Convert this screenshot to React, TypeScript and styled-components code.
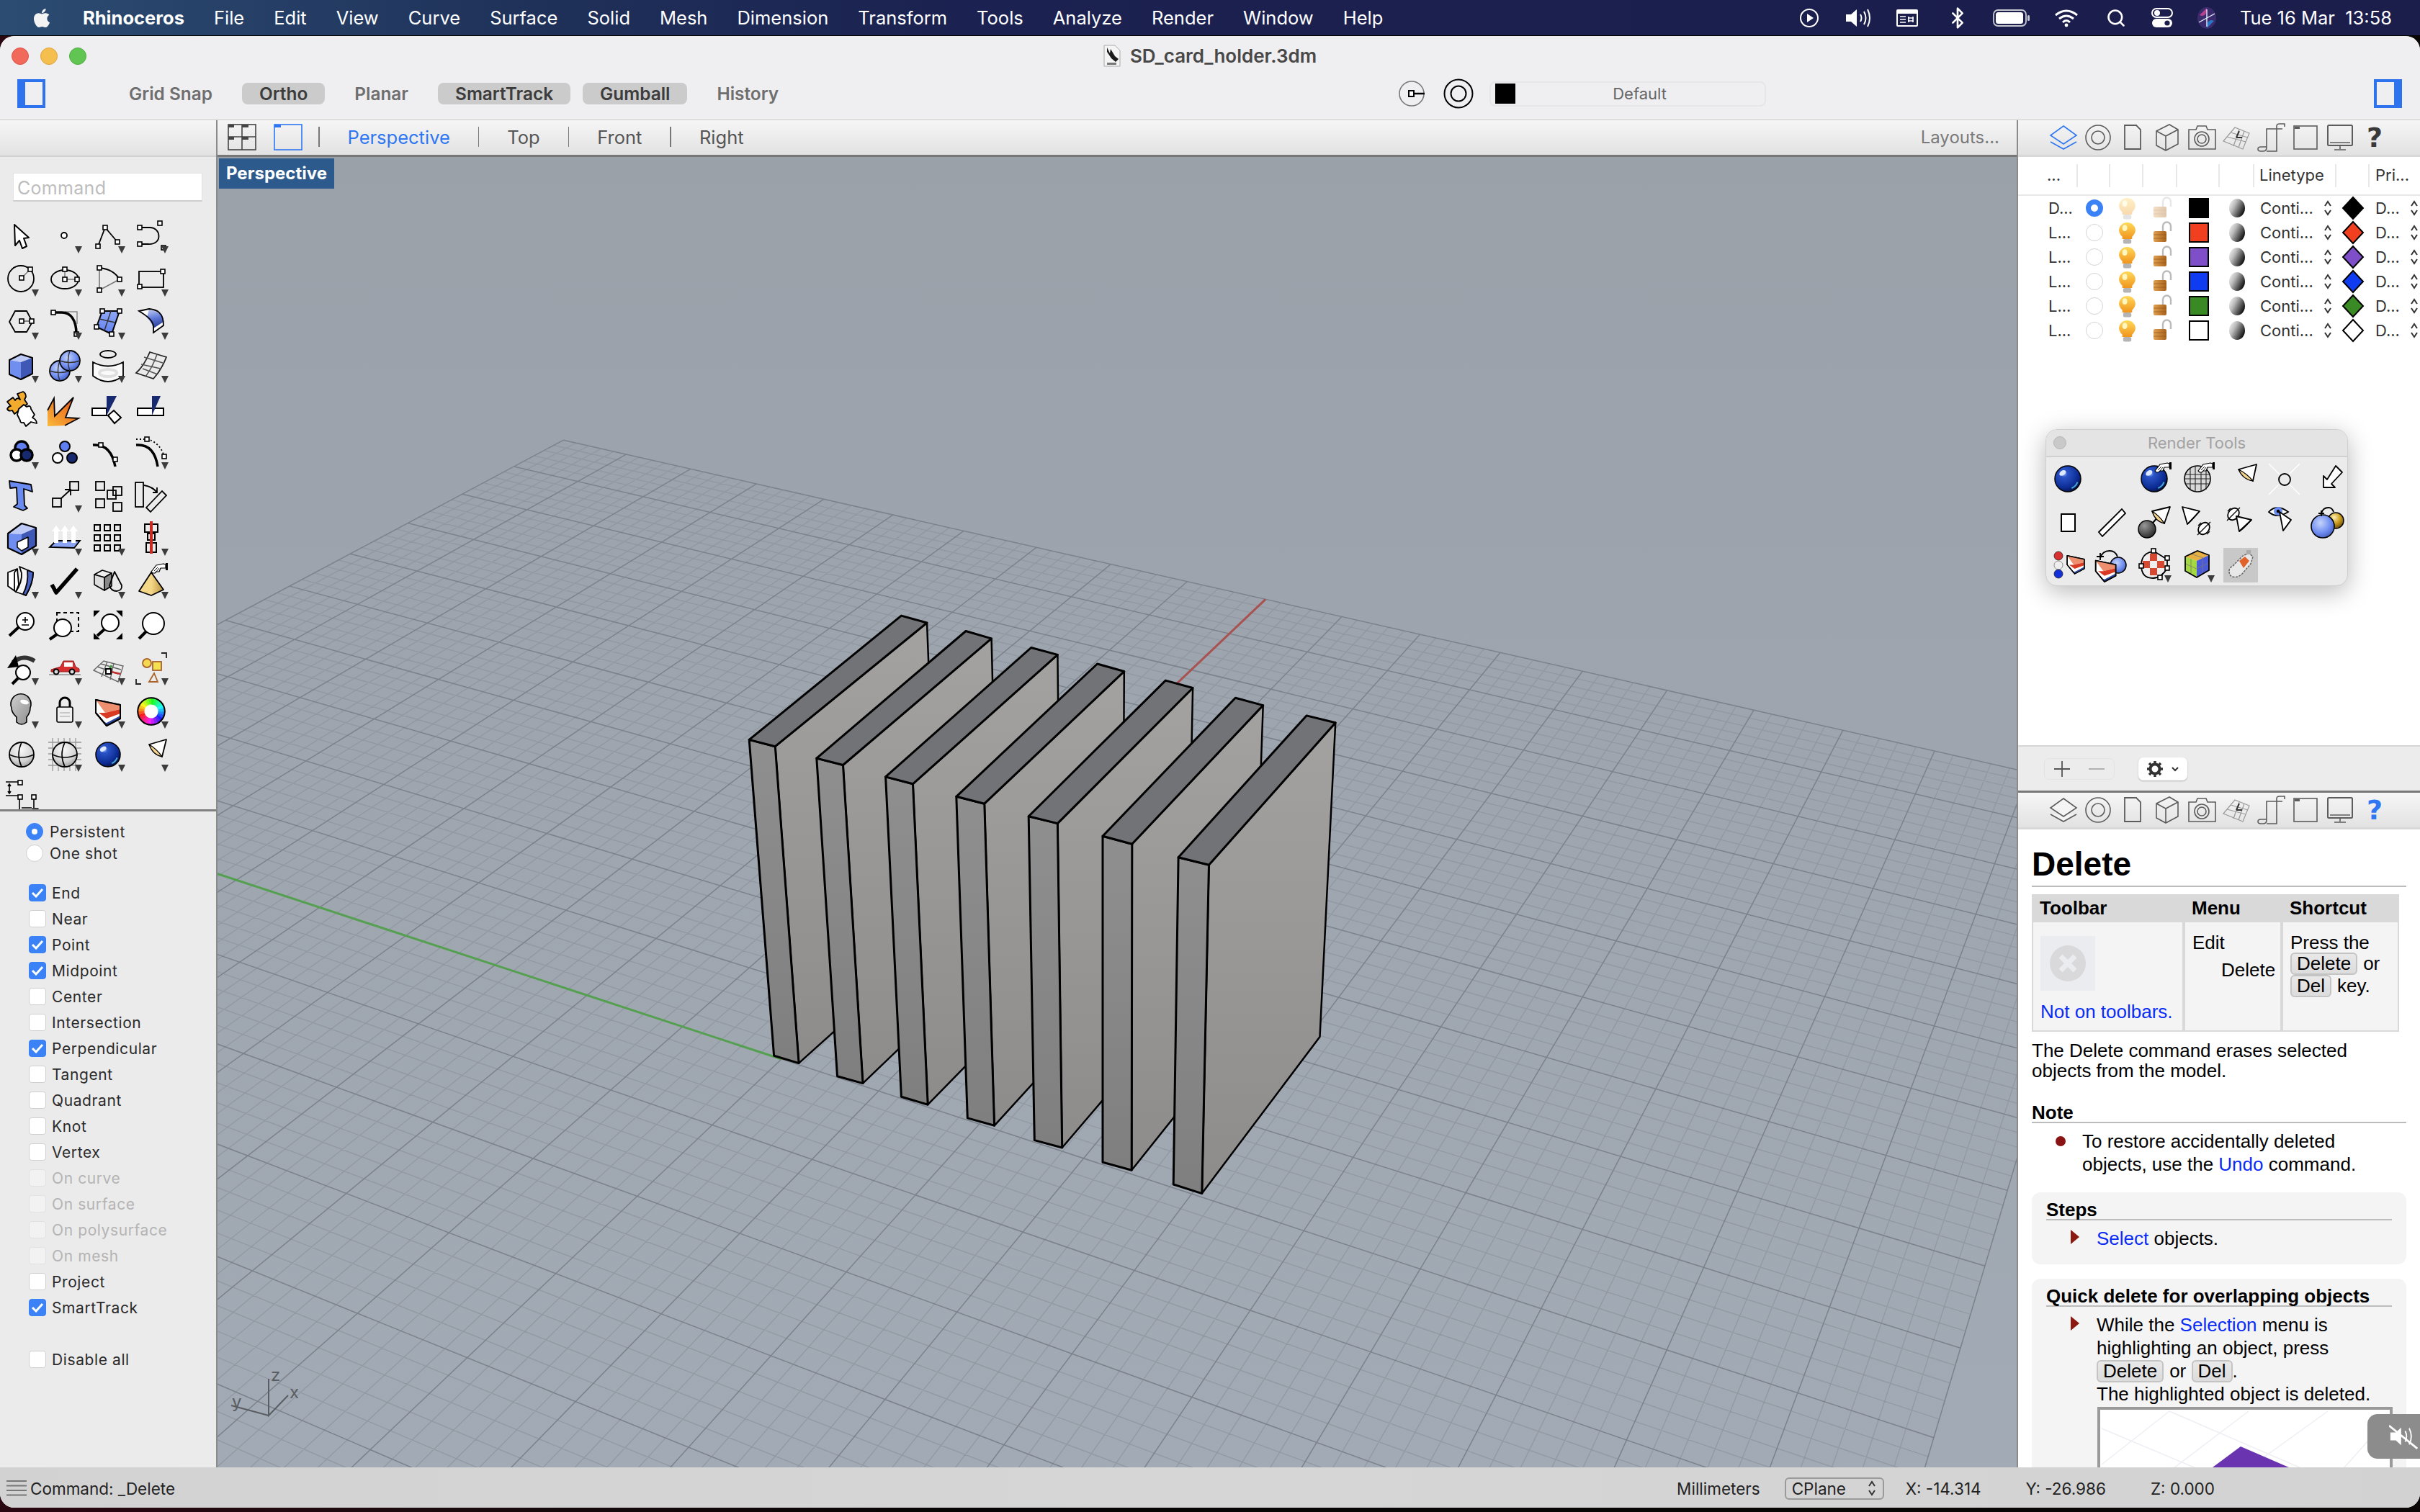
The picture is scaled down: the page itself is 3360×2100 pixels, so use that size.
import React from 'react';
import styled, { createGlobalStyle } from 'styled-components';
import { FaApple } from 'react-icons/fa';
import { Bluetooth, Search } from 'lucide-react';

const GlobalStyle = createGlobalStyle`
  html, body {
    margin: 0;
    padding: 0;
    background: #14060a;
  }
  * { box-sizing: border-box; }
`;

const UI = `Inter, "Liberation Sans", sans-serif`;
const HELP = `"Liberation Sans", Arial, sans-serif`;

const Screen = styled.div`
  width: 3360px;
  height: 2100px;
  overflow: hidden;
  display: flex;
  flex-direction: column;
  background: linear-gradient(90deg, #2a0610 0, #1a0a0e 18%, #060404 40%, #0a0606 100%);
  font-family: ${UI};
`;

/* ---- menu bar ---- */
const MenuBar = styled.div`
  height: 49px;
  flex: none;
  display: flex;
  align-items: center;
  color: #fff;
  padding-left: 43px;
  background: linear-gradient(90deg, #2c4c72 0, #1f3159 22%, #1b2150 40%, #1b1d4b 100%);
  box-shadow: 0 1px 0 #000;
`;
const AppleSlot = styled.div`
  width: 72px;
  display: flex;
  align-items: center;
  font-size: 30px;
  color: #f3f3f3;
`;
const MenuItems = styled.div`
  display: flex;
  gap: 41px;
  font-size: 25.5px;
`;
const MenuItem = styled.span<{ $app?: boolean }>`
  font-weight: ${(p) => (p.$app ? 700 : 400)};
`;
const StatusIcons = styled.div`
  margin-left: auto;
  display: flex;
  align-items: center;
  height: 100%;
`;
const StatusSlot = styled.div<{ $w: number }>`
  width: ${(p) => p.$w}px;
  display: flex;
  justify-content: center;
  align-items: center;
`;
const Clock = styled.div`
  font-size: 25.5px;
  margin: 0 39px 0 16px;
  white-space: pre;
`;

/* ---- window ---- */
const Window = styled.div`
  margin-top: 1px;
  width: 3360px;
  height: 2044px;
  flex: none;
  border-radius: 20px;
  overflow: hidden;
  display: flex;
  flex-direction: column;
  background: #efeef1;
`;
const TitleBar = styled.div`
  height: 117px;
  flex: none;
  border-bottom: 1px solid #cbcbcb;
  background: #efeef1;
  display: flex;
  flex-direction: column;
`;
const TitleRow = styled.div`
  height: 54px;
  display: grid;
  grid-template-columns: 1fr auto 1fr;
  align-items: center;
`;
const Lights = styled.div`
  display: flex;
  gap: 16px;
  padding: 2px 0 0 16px;
`;
const Light = styled.span<{ $c: string; $b: string }>`
  width: 24px;
  height: 24px;
  border-radius: 50%;
  background: ${(p) => p.$c};
  border: 1px solid ${(p) => p.$b};
`;
const TitleText = styled.div`
  display: flex;
  align-items: center;
  gap: 13px;
  font-size: 26px;
  font-weight: 600;
  color: #484848;
`;
const ToolbarRow = styled.div`
  height: 40px;
  margin-top: 6px;
  padding: 0 25px 0 24px;
  display: flex;
  align-items: center;
`;
const Toggles = styled.div`
  display: flex;
  align-items: center;
  gap: 17px;
  margin-left: 92px;
`;
const Toggle = styled.div<{ $on?: boolean }>`
  height: 30px;
  padding: 0 24px;
  display: flex;
  align-items: center;
  border-radius: 8px;
  font-size: 24.4px;
  font-weight: 600;
  color: ${(p) => (p.$on ? '#3c3c3c' : '#6f6f6f')};
  background: ${(p) => (p.$on ? '#cbcbcb' : 'transparent')};
`;
const CenterTools = styled.div`
  margin-left: auto;
  margin-right: auto;
  padding-right: 8px;
  display: flex;
  align-items: center;
  gap: 14px;
`;
const OsnapIcon = styled.svg`
  margin-right: 12px;
`;
const LayerBox = styled.div`
  width: 384px;
  height: 35px;
  border: 2px solid #e6e5e8;
  border-radius: 8px;
  display: flex;
  align-items: center;
  padding-left: 6px;
  margin-left: 8px;
  font-size: 22px;
  color: #666;
`;
const LayerSwatch = styled.span`
  width: 28px;
  height: 28px;
  background: #000;
`;
const LayerName = styled.span`
  flex: 1;
  text-align: center;
`;

const Main = styled.div`
  height: 1871px;
  flex: none;
  display: flex;
`;

/* ---- left panel ---- */
const LeftPanel = styled.div`
  width: 300px;
  flex: none;
  display: flex;
  flex-direction: column;
  background: #ebebeb;
`;
const TabRowBg = styled.div`
  height: 51px;
  flex: none;
  background: linear-gradient(#f6f6f6, #e2e2e2);
`;
const LeftHead = styled(TabRowBg)`
  border-bottom: 2px solid #d0d0d0;
`;
const CommandInput = styled.div`
  height: 40px;
  margin: 22px 19px 18px 18px;
  background: #fff;
  border: 1px solid #e2e2e2;
  border-bottom: 2px solid #cfcfcf;
  color: #bdbdbd;
  font-size: 25px;
  line-height: 41px;
  padding-left: 5px;
  letter-spacing: 0.3px;
`;
const ToolGrid = styled.div`
  height: 826px;
  flex: none;
  display: grid;
  grid-template-columns: repeat(4, 60px);
  grid-auto-rows: 60px;
  overflow: hidden;
`;
const Cell = styled.svg`
  width: 60px;
  height: 60px;
  overflow: visible;
  display: block;
`;
const SnapPanel = styled.div`
  flex: 1;
  border-top: 3px solid #808080;
  padding-top: 13px;
  font-size: 21px;
  letter-spacing: 0.6px;
  color: #2a2a2a;
`;
const RadioRow = styled.div`
  height: 30px;
  display: flex;
  align-items: center;
  gap: 9px;
  padding-left: 36px;
`;
const RadioDot = styled.span<{ $on?: boolean }>`
  width: 24px;
  height: 24px;
  border-radius: 50%;
  display: flex;
  align-items: center;
  justify-content: center;
  background: ${(p) => (p.$on ? '#3b82f6' : '#fff')};
  border: 1px solid ${(p) => (p.$on ? '#3b82f6' : '#d0d0d0')};
  &::after {
    content: '';
    width: 8px;
    height: 8px;
    border-radius: 50%;
    background: ${(p) => (p.$on ? '#fff' : 'transparent')};
  }
`;
const CheckRow = styled.div<{ $top?: number; $off?: boolean }>`
  height: 36px;
  margin-top: ${(p) => p.$top ?? 0}px;
  display: flex;
  align-items: center;
  gap: 8px;
  padding-left: 40px;
  color: ${(p) => (p.$off ? '#b4b4b4' : '#2a2a2a')};
`;
const CheckBox = styled.span<{ $on?: boolean; $off?: boolean }>`
  width: 24px;
  height: 24px;
  border-radius: 4px;
  display: flex;
  align-items: center;
  justify-content: center;
  background: ${(p) => (p.$on ? '#3b82f6' : p.$off ? '#f2f2f2' : '#fff')};
  border: 1px solid ${(p) => (p.$on ? '#3b82f6' : p.$off ? '#e2e2e2' : '#cfcfcf')};
`;

/* ---- centre ---- */
const Centre = styled.div`
  width: 2500px;
  flex: none;
  display: flex;
  flex-direction: column;
  border-left: 2px solid #8a8a8a;
`;
const ViewTabs = styled(TabRowBg)`
  border-bottom: 3px solid #777;
  display: flex;
  align-items: center;
  padding: 0 0 2px 14px;
  font-size: 25.5px;
  color: #555;
`;
const ViewIcon = styled.svg<{ $gap?: number }>`
  width: 40px;
  height: 37px;
  margin-right: ${(p) => p.$gap ?? 24}px;
`;
const TabSep = styled.span`
  width: 1.5px;
  height: 28px;
  background: #777;
`;
const ViewTab = styled.span<{ $on?: boolean }>`
  padding: 0 39px;
  color: ${(p) => (p.$on ? '#2f77f2' : '#555')};
`;
const Layouts = styled.span`
  margin-left: auto;
  padding-right: 24px;
  font-size: 24px;
  color: #7a7a7a;
`;
const Viewport = styled.div`
  flex: 1;
  position: relative;
  background: linear-gradient(#9aa1a9, #a2aab5);
  min-height: 0;
`;
const ViewSvg = styled.svg`
  display: block;
  width: 100%;
  height: 100%;
`;
const ViewLabel = styled.div`
  position: absolute;
  left: 2px;
  top: 2px;
  width: 160px;
  height: 42px;
  background: #2d5a8c;
  color: #fff;
  font-size: 24px;
  font-weight: 700;
  line-height: 42px;
  text-align: center;
`;

/* ---- right panels ---- */
const RightPanel = styled.div`
  width: 560px;
  flex: none;
  display: flex;
  flex-direction: column;
  border-left: 2px solid #8a8a8a;
  background: #fff;
  position: relative;
`;
const PanelTabs = styled(TabRowBg)`
  display: flex;
  align-items: center;
  padding-left: 39px;
  border-bottom: 3px solid #d8d8d8;
`;
const PanelIcon = styled.svg`
  width: 48px;
  height: 48px;
  flex: none;
`;
const Question = styled.span<{ $on?: boolean }>`
  width: 48px;
  text-align: center;
  font-family: "DejaVu Sans", sans-serif;
  font-weight: 700;
  font-size: 38px;
  line-height: 48px;
  color: ${(p) => (p.$on ? '#2f77f2' : '#3a3a3a')};
`;
const LayersBody = styled.div`
  height: 817px;
  flex: none;
  font-size: 22px;
  color: #333;
`;
const LayerGrid = styled.div`
  display: grid;
  grid-template-columns: 83px 45px 46px 47px 59px 48px 114px 46px 72px;
  height: 34px;
  align-items: center;
`;
const LayerHeader = styled(LayerGrid)`
  height: 54px;
  border-bottom: 2px solid #e8e8e8;
`;
const HeadCell = styled.div<{ $none?: boolean; $pad: number }>`
  height: 32px;
  line-height: 30px;
  padding-left: ${(p) => p.$pad}px;
  border-right: ${(p) => (p.$none ? 'none' : '2px solid #e8e8e8')};
`;
const LayerName2 = styled.div`
  padding-left: 42px;
`;
const Center = styled.div`
  display: flex;
  align-items: center;
  justify-content: center;
`;
const LinetypeCell = styled.div`
  display: flex;
  align-items: center;
  padding-left: 8px;
  gap: 14px;
`;
const ColourSwatch = styled.span<{ $c: string }>`
  width: 28px;
  height: 28px;
  background: ${(p) => p.$c};
  border: 2px solid #000;
`;
const ActiveRadio = styled.span<{ $on?: boolean }>`
  width: 24px;
  height: 24px;
  border-radius: 50%;
  background: #fff;
  border: ${(p) => (p.$on ? '7px solid #3b82f6' : '1px solid #d4d4d4')};
`;
const SmallSvg = styled.svg`
  display: block;
  overflow: visible;
`;
const LayersBar = styled.div`
  height: 66px;
  flex: none;
  background: #ececec;
  border-top: 2px solid #d6d6d6;
  border-bottom: 3px solid #777;
  display: flex;
  align-items: center;
  padding-left: 36px;
  gap: 33px;
`;
const PlusMinus = styled.div`
  width: 98px;
  height: 30px;
  border: 1px solid #e3e3e3;
  border-radius: 7px;
  display: flex;
  align-items: center;
`;
const PmCell = styled.svg`
  width: 48px;
  height: 28px;
`;
const GearButton = styled.div`
  width: 68px;
  height: 32px;
  background: #fff;
  border-radius: 7px;
  box-shadow: 0 1px 2px rgba(0, 0, 0, 0.25);
  display: flex;
  align-items: center;
  justify-content: center;
  gap: 12px;
`;
const Palette = styled.div`
  position: absolute;
  left: 38px;
  top: 429px;
  width: 420px;
  height: 218px;
  border-radius: 16px;
  background: #ebebeb;
  border: 1px solid #cfcfcf;
  box-shadow: 0 8px 34px rgba(0, 0, 0, 0.28);
  overflow: hidden;
`;
const PaletteTitle = styled.div`
  height: 38px;
  background: #e5e4e5;
  border-bottom: 2px solid #d0d0d0;
  color: #a2a2a2;
  font-size: 22px;
  line-height: 36px;
  text-align: center;
  position: relative;
`;
const PaletteClose = styled.span`
  position: absolute;
  left: 10px;
  top: 9px;
  width: 18px;
  height: 18px;
  border-radius: 50%;
  background: #c9c9c9;
  border: 1px solid #b5b5b5;
`;
const PaletteGrid = styled.div`
  display: grid;
  grid-template-columns: repeat(7, 60px);
  grid-auto-rows: 60px;
`;
const HiCell = styled.div`
  width: 60px;
  height: 60px;
  display: flex;
  align-items: center;
  justify-content: center;
`;
const HiBack = styled.div`
  width: 48px;
  height: 48px;
  background: #c8c8c8;
  display: flex;
  align-items: center;
  justify-content: center;
`;

/* ---- help ---- */
const Help = styled.div`
  flex: 1;
  min-height: 0;
  overflow: hidden;
  padding: 18px 19px 0 19px;
  font-family: ${HELP};
  font-size: 26px;
  line-height: 28px;
  color: #000;
  position: relative;
`;
const HelpTitle = styled.div`
  font-size: 46px;
  font-weight: 700;
  line-height: 60px;
  border-bottom: 2px solid #bcbcbc;
`;
const CmdTable = styled.div`
  margin-top: 10px;
  width: 510px;
  display: grid;
  grid-template-columns: 211px 136px 163px;
  grid-template-rows: 39px 152px;
`;
const HeadC = styled.div`
  background: #d9d9d9;
  font-weight: 700;
  padding-left: 11px;
  line-height: 39px;
`;
const BodyC = styled.div`
  background: #f4f4f4;
  border: 2px solid #d9d9d9;
  border-top: none;
  padding: 14px 6px 0 10px;
`;
const BlockLine = styled.div<{ $pad?: number; $top?: number }>`
  padding-left: ${(p) => p.$pad ?? 0}px;
  margin-top: ${(p) => p.$top ?? 0}px;
  white-space: nowrap;
`;
const NotIcon = styled.div`
  width: 76px;
  height: 76px;
  margin: 5px 0 15px 0;
  background: #ebecef;
  display: flex;
  align-items: center;
  justify-content: center;
`;
const Link = styled.span`
  color: #0a2cf5;
`;
const Key = styled.span<{ $last?: boolean }>`
  display: inline-block;
  background: linear-gradient(#e8e8e8, #dcdcdc);
  border: 2px solid #c4c4c4;
  border-radius: 6px;
  line-height: 27px;
  padding: 0 7px;
  margin-right: ${(p) => (p.$last ? 0 : 8)}px;
`;
const Para = styled.p`
  margin: 12px 0 0;
`;
const SectionHead = styled.div<{ $top?: number }>`
  margin-top: ${(p) => p.$top ?? 0}px;
  font-weight: 700;
  border-bottom: 2px solid #bcbcbc;
  height: 29px;
`;
const ListItem = styled.div<{ $top: number }>`
  display: flex;
  margin-top: ${(p) => p.$top}px;
  line-height: 32px;
`;
const NoteDot = styled.span`
  flex: none;
  width: 14px;
  height: 14px;
  margin: 9px 23px 0 33px;
  border-radius: 50%;
  background: #8a1414;
`;
const Arrow = styled.span`
  flex: none;
  width: 0;
  height: 0;
  margin: 4px 24px 0 34px;
  border-left: 12px solid #8a1a10;
  border-top: 10px solid transparent;
  border-bottom: 10px solid transparent;
`;
const StepBox = styled.div<{ $top: number; $h?: number }>`
  margin-top: ${(p) => p.$top}px;
  background: #f4f4f4;
  border-radius: 12px;
  padding: 10px 20px 0;
  height: ${(p) => p.$h ?? 400}px;
`;
const Shot = styled.svg`
  display: block;
  margin: 2px 0 0 71px;
  width: 410px;
  height: 200px;
`;
const MuteHud = styled.div`
  position: absolute;
  right: 0;
  top: 1797px;
  width: 73px;
  height: 62px;
  border-radius: 14px 0 0 14px;
  background: #8c8c8c;
  overflow: hidden;
  display: flex;
  align-items: center;
  padding-left: 30px;
`;

/* ---- status bar ---- */
const StatusBar = styled.div`
  flex: 1;
  display: flex;
  align-items: center;
  padding: 2px 285px 0 9px;
  font-size: 22.5px;
  color: #222;
  background: linear-gradient(90deg, #d2d2d2, #d6d6d6 50%, #d2d2d2);
`;
const CmdHistory = styled.svg`
  width: 28px;
  height: 22px;
  margin-right: 5px;
`;
const StatusRight = styled.div`
  margin-left: auto;
  display: flex;
  align-items: center;
`;
const StatusText = styled.span<{ $gap: number }>`
  margin-left: ${(p) => p.$gap}px;
`;
const CPlaneSelect = styled.div`
  margin-left: 34px;
  width: 138px;
  height: 31px;
  border: 2px solid #9a9a9a;
  border-radius: 6px;
  display: flex;
  align-items: center;
  justify-content: space-between;
  padding: 0 9px 0 8px;
`;

/* ---- drawing helpers ---- */
const Sq = ({ x, y, s = 6 }: { x: number; y: number; s?: number }) => (
  <rect x={x - s / 2} y={y - s / 2} width={s} height={s} fill="#fff" stroke="#000" strokeWidth="1.6" />
);
const Dd = () => <polygon points="44,44 54,44 49,54" fill="#3c3c3c" />;
const line = { fill: 'none', stroke: '#000', strokeWidth: 1.8 } as const;

const Defs = () => (
  <svg width="0" height="0" style={{ display: 'block', height: 0 }}>
    <defs>
      <radialGradient id="gloss" cx="0.35" cy="0.3" r="0.75">
        <stop offset="0" stopColor="#9dbcff" />
        <stop offset="0.18" stopColor="#2b55c8" />
        <stop offset="0.75" stopColor="#0b2a92" />
        <stop offset="1" stopColor="#06123f" />
      </radialGradient>
      <radialGradient id="softBlue" cx="0.4" cy="0.35" r="0.8">
        <stop offset="0" stopColor="#c5d4fb" />
        <stop offset="0.55" stopColor="#6f8df0" />
        <stop offset="1" stopColor="#2f49a6" />
      </radialGradient>
      <radialGradient id="greyBall" cx="0.45" cy="0.3" r="0.8">
        <stop offset="0" stopColor="#fafafa" />
        <stop offset="0.6" stopColor="#d4d4d4" />
        <stop offset="1" stopColor="#8f8f8f" />
      </radialGradient>
      <radialGradient id="darkBall" cx="0.35" cy="0.3" r="0.8">
        <stop offset="0" stopColor="#999" />
        <stop offset="0.7" stopColor="#444" />
        <stop offset="1" stopColor="#222" />
      </radialGradient>
      <radialGradient id="goldBall" cx="0.4" cy="0.3" r="0.8">
        <stop offset="0" stopColor="#fff0b0" />
        <stop offset="0.5" stopColor="#c99a1c" />
        <stop offset="1" stopColor="#5a3d06" />
      </radialGradient>
      <linearGradient id="patch" x1="0" y1="0" x2="0" y2="1">
        <stop offset="0" stopColor="#8fa9f6" />
        <stop offset="1" stopColor="#5f7ff0" />
      </linearGradient>
      <linearGradient id="bend" x1="0" y1="0" x2="0.3" y2="1">
        <stop offset="0" stopColor="#d9e2fb" />
        <stop offset="0.6" stopColor="#5d78d8" />
        <stop offset="1" stopColor="#2e4296" />
      </linearGradient>
      <linearGradient id="fire" x1="0" y1="1" x2="1" y2="0">
        <stop offset="0" stopColor="#f9b93c" />
        <stop offset="0.6" stopColor="#ee7a24" />
        <stop offset="1" stopColor="#d9481a" />
      </linearGradient>
      <linearGradient id="bulbGold" x1="0" y1="0" x2="0" y2="1">
        <stop offset="0" stopColor="#ffd95a" />
        <stop offset="1" stopColor="#f0941c" />
      </linearGradient>
      <linearGradient id="bulbGrey" x1="0" y1="0" x2="1" y2="1">
        <stop offset="0" stopColor="#cfcfcf" />
        <stop offset="1" stopColor="#8e8e8e" />
      </linearGradient>
      <linearGradient id="lockBrown" x1="0" y1="0" x2="1" y2="0">
        <stop offset="0" stopColor="#e0a050" />
        <stop offset="1" stopColor="#a8621c" />
      </linearGradient>
      <linearGradient id="shade" x1="0" y1="0" x2="1" y2="0.6">
        <stop offset="0" stopColor="#fff" />
        <stop offset="0.4" stopColor="#bbb" />
        <stop offset="1" stopColor="#111" />
      </linearGradient>
      <linearGradient id="pyramid" x1="0" y1="0" x2="1" y2="0">
        <stop offset="0" stopColor="#f4d888" />
        <stop offset="1" stopColor="#b8923c" />
      </linearGradient>
    </defs>
  </svg>
);

const Glossy = ({ x = 30, y = 30, r = 18 }: { x?: number; y?: number; r?: number }) => (
  <g>
    <circle cx={x} cy={y} r={r} fill="url(#gloss)" stroke="#000" strokeWidth="1.5" />
    <ellipse cx={x - r * 0.4} cy={y - r * 0.45} rx={r * 0.28} ry={r * 0.18} fill="#dfe9ff" transform={`rotate(-35 ${x - r * 0.4} ${y - r * 0.45})`} />
    <path d={`M${x + r * 0.3} ${y + r * 0.72} A${r * 0.8} ${r * 0.8} 0 0 0 ${x + r * 0.75} ${y + r * 0.25}`} fill="none" stroke="#49a8d8" strokeWidth={r * 0.12} />
  </g>
);
const Hand = ({ x, y }: { x: number; y: number }) => (
  <g transform={`translate(${x} ${y})`}>
    <path d="M-9 10 L-2 1 L8 -1 L11 0 L11 5 L4 5 L2 10 L-2 10 L-4 12 L-7 12 Z" fill="#fff" stroke="#000" strokeWidth="1.2" />
    <path d="M-5 9 L0 4 M-2 10 L2 5" stroke="#000" strokeWidth="0.9" />
    <rect x="11" y="-2" width="3" height="10" fill="#000" />
  </g>
);
const Cone = ({ t, a, b }: { t: [number, number]; a: [number, number]; b: [number, number] }) => {
  const mx = (a[0] + b[0]) / 2;
  const my = (a[1] + b[1]) / 2;
  return (
    <g>
      <polygon points={`${t[0]},${t[1]} ${a[0]},${a[1]} ${b[0]},${b[1]}`} fill="#fff" stroke="#000" strokeWidth="1.8" strokeLinejoin="round" />
      <path d={`M${a[0]} ${a[1]} Q${mx - 4} ${my + 6} ${b[0]} ${b[1]} Q${mx + 2} ${my - 2} ${a[0]} ${a[1]}`} fill="#f4d48c" stroke="#000" strokeWidth="1.2" />
    </g>
  );
};
const Wedge = ({ s = 1, x = 0, y = 0 }: { s?: number; x?: number; y?: number }) => (
  <g transform={`translate(${x} ${y}) scale(${s})`} strokeLinejoin="round">
    <polygon points="13,14 47,21 47,40 28,50 13,32" fill="#fff" stroke="#000" strokeWidth="2" />
    <polygon points="13,14 47,21 47,27 26,32" fill="#ee9070" />
    <polygon points="26,32 47,27 47,33 28,40 17,32" fill="#d83a24" />
    <polygon points="28,46 47,36 47,40 28,50 22,44" fill="#2a479e" />
    <polygon points="13,14 47,21 47,40 28,50 13,32" fill="none" stroke="#000" strokeWidth="2" />
  </g>
);
const EYE = (x: number, y: number) => (
  <g>
    <ellipse cx={x} cy={y} rx="7" ry="9" fill="#fff" stroke="#000" strokeWidth="1.8" transform={`rotate(40 ${x} ${y})`} />
    <path d={`M${x - 9} ${y + 9} L${x + 9} ${y - 9} M${x - 8} ${y - 4} L${x - 4} ${y - 8} M${x + 4} ${y + 8} L${x + 8} ${y + 4}`} stroke="#000" strokeWidth="1.3" />
  </g>
);

const colourRing = Array.from({ length: 24 }, (_, i) => {
  const a0 = (i / 24) * Math.PI * 2;
  const a1 = ((i + 1.1) / 24) * Math.PI * 2;
  const p = (a: number) => `${30 + 14 * Math.cos(a)} ${30 + 14 * Math.sin(a)}`;
  return <path key={i} d={`M${p(a0)} A14 14 0 0 1 ${p(a1)}`} fill="none" stroke={`hsl(${(i * 15 + 210) % 360} 95% 55%)`} strokeWidth="9" />;
});

/* four toolbox columns, one entry per cell, in a 60x60 box */
const TOOLS: [React.ReactNode, boolean][] = [
  // row 0
  [<polygon points="20,14 40,32 33,33 37,44 31,47 27,36 21,43" fill="#fff" stroke="#000" strokeWidth="2" strokeLinejoin="round" />, false],
  [<circle cx="29" cy="29" r="4" fill="#fff" stroke="#000" strokeWidth="1.8" />, true],
  [<g><path d="M16 44 L26 18 L43 38" {...line} /><Sq x={16} y={44} /><Sq x={26} y={18} /><Sq x={43} y={38} /></g>, true],
  [<g><path d="M14 18 H28 C44 18 46 42 26 41 H14" {...line} /><Sq x={14} y={18} /><Sq x={42} y={12} /><Sq x={14} y={41} /><Sq x={47} y={46} /></g>, true],
  // row 1
  [<g><circle cx="29" cy="29" r="18" {...line} /><path d="M30 28 L42 16" fill="none" stroke="#777" strokeWidth="1.5" /><Sq x={30} y={28} /><Sq x={42} y={16} /></g>, true],
  [<g><ellipse cx="30" cy="30" rx="19" ry="13" {...line} /><path d="M30 16 V30 H47" fill="none" stroke="#777" strokeWidth="1.5" /><Sq x={30} y={16} /><Sq x={30} y={30} /><Sq x={47} y={30} /></g>, true],
  [<g><path d="M18 14 V45 L46 30" fill="none" stroke="#777" strokeWidth="1.6" /><path d="M18 14 Q38 16 46 30" {...line} /><Sq x={18} y={14} /><Sq x={46} y={30} /><Sq x={18} y={45} /></g>, true],
  [<g><rect x="13" y="19" width="34" height="22" {...line} /><Sq x={46} y={19} /><Sq x={14} y={40} /></g>, true],
  // row 2
  [<g><polygon points="13,29 21,14 37,14 45,29 37,43 21,43" {...line} /><path d="M30 28 H44" stroke="#555" strokeWidth="1.4" /><Sq x={30} y={28} /><Sq x={44} y={28} /></g>, true],
  [<g><path d="M30 15 H47 V32" fill="none" stroke="#888" strokeWidth="1.5" /><path d="M14 16 H26 C38 16 46 26 46 46" fill="none" stroke="#000" strokeWidth="3.5" /><Sq x={14} y={16} /><Sq x={46} y={46} /></g>, true],
  [<g><polygon points="22,14 46,14 35,46 14,36" fill="url(#patch)" stroke="#000" strokeWidth="2" /><path d="M18 25 L40 30 M34 14 L25 41" stroke="#333" strokeWidth="1.5" /><Sq x={22} y={14} /><Sq x={46} y={14} /><Sq x={14} y={36} /><Sq x={35} y={46} /></g>, true],
  [<g><path d="M14 14 L27 11 L44 18 Q48 24 47 32 L33 39 Q32 28 14 14 Z" fill="url(#bend)" /><path d="M13 14 L27 11 L24 23 Z" fill="#fff" /><path d="M33 38 L47 29 L47 34 L33 44 Z" fill="#fff" /><path d="M13 14 L27 11 C38 12 47 16 47 34 L33 44 V36 C33 28 26 22 13 14 Z" {...line} /></g>, true],
  // row 3
  [<g strokeLinejoin="round"><polygon points="13,22 29,14 45,19 29,25" fill="#bfcbf7" /><polygon points="13,22 29,25 29,49 13,42" fill="#6f8ef0" /><polygon points="29,25 45,19 45,41 29,49" fill="#3f57b5" /><polygon points="13,22 29,14 45,19 45,41 29,49 13,42" fill="none" stroke="#000" strokeWidth="2" /></g>, true],
  [<g><circle cx="23" cy="37" r="14" fill="url(#softBlue)" stroke="#000" strokeWidth="1.8" /><path d="M9 37 Q23 42 37 37 M23 23 Q18 37 23 51" fill="none" stroke="#333" strokeWidth="1.4" /><circle cx="37" cy="23" r="14" fill="url(#softBlue)" stroke="#000" strokeWidth="1.8" /><path d="M23 23 Q37 28 51 23 M37 9 Q32 23 37 37" fill="none" stroke="#333" strokeWidth="1.4" /></g>, true],
  [<g><ellipse cx="30" cy="14" rx="11" ry="5" {...line} /><path d="M9 25 Q30 36 51 25 V44 Q30 60 9 44 Z" fill="#fafafa" stroke="#000" strokeWidth="1.8" /><ellipse cx="30" cy="40" rx="12" ry="5" fill="none" stroke="#e0e0e0" strokeWidth="4" /></g>, true],
  [<g fill="none" stroke="#555" strokeWidth="1.6"><path d="M9 40 Q20 30 28 11 L51 18 Q44 36 33 48 Z" stroke="#222" strokeWidth="1.8" /><path d="M16 28 L43 34 M20 18 L46 26 M38 14 Q32 32 22 45 M18 34 L39 42" /></g>, true],
  // row 4
  [<g strokeLinejoin="round" stroke="#000" strokeWidth="1.8"><path d="M10 20 L18 14 L21 18 Q24 13 28 17 L24 9 L32 6 Q36 8 36 13 L34 17 L38 23 L20 37 L17 32 Q12 34 10 30 Q12 26 15 26 Z" fill="#f2ab2c" /><path d="M26 30 L33 24 L37 27 Q43 24 43 30 L48 38 L45 42 Q51 45 51 50 L43 48 L36 54 L33 49 Q28 50 28 46 L24 38 Z" fill="#fff" /></g>, false],
  [<g><polygon points="6,54 6,32 15,15 16,40 42,14 31,42 49,43 30,53" fill="url(#fire)" /><path d="M6 32 L15 15 L16 40 L42 14 L31 42 L49 43 L30 53" fill="none" stroke="#000" strokeWidth="1.8" /></g>, false],
  [<g><rect x="8" y="29" width="20" height="10" fill="#fff" stroke="#000" strokeWidth="2" /><polygon points="28,12 42,12 28,39" fill="#17296f" /><polygon points="30,39 38,32 48,42 39,50" fill="#fff" stroke="#000" strokeWidth="2" /></g>, false],
  [<g><rect x="11" y="29" width="36" height="10" fill="#fff" stroke="#000" strokeWidth="2" /><polygon points="31,12 43,12 31,39" fill="#17296f" /></g>, false],
  // row 5
  [<g stroke="#000" strokeWidth="3.5"><circle cx="30" cy="24" r="9" fill="#5f7ff0" /><circle cx="23" cy="34" r="8" fill="#fff" /><circle cx="37" cy="34" r="8" fill="#17296f" /></g>, true],
  [<g stroke="#000" strokeWidth="2"><circle cx="30" cy="22" r="7" fill="#5f7ff0" /><circle cx="20" cy="38" r="7" fill="#fff" /><circle cx="40" cy="38" r="7" fill="#17296f" /></g>, false],
  [<g><path d="M9 20 Q34 18 40 50" fill="none" stroke="#000" strokeWidth="3.5" /><Sq x={20} y={20} /><Sq x={40} y={40} /></g>, false],
  [<g><path d="M9 20 Q34 18 39 50" fill="none" stroke="#000" strokeWidth="3.5" /><path d="M9 12 H24 Q42 16 48 36" fill="none" stroke="#000" strokeWidth="1.8" strokeDasharray="2 3" /><Sq x={24} y={12} /><Sq x={48} y={36} /></g>, true],
  // row 6
  [<path d="M13 10 L43 15 L45 25 L33 21 L34 44 L38 48 L32 51 L19 46 L24 42 L23 19 L14 20 Z" fill="#6a8cf0" stroke="#000" strokeWidth="1.8" strokeLinejoin="round" />, false],
  [<g><rect x="37" y="11" width="12" height="12" {...line} /><rect x="13" y="34" width="12" height="12" {...line} /><path d="M24 35 L38 22 M30 22 H38 V30" {...line} /></g>, true],
  [<g {...line}><rect x="13" y="11" width="12" height="12" /><rect x="37" y="18" width="12" height="12" /><rect x="29" y="23" width="12" height="12" /><rect x="13" y="35" width="12" height="12" /><rect x="37" y="40" width="12" height="12" /></g>, false],
  [<g {...line}><rect x="8" y="12" width="11" height="34" /><polygon points="23,47 45,24 51,30 29,53" /><path d="M20 16 Q32 18 38 26 M38 19 V26 H32" /></g>, false],
  // row 7
  [<g strokeLinejoin="round"><polygon points="11,23 30,9 50,15 30,24" fill="#bfcbf7" /><polygon points="11,23 30,24 30,52 11,43" fill="#6f8ef0" /><polygon points="30,24 50,15 50,40 30,52" fill="#3f57b5" /><polygon points="24,35 39,28 39,42 30,47 24,42" fill="#fff" stroke="#000" strokeWidth="1.5" /><polygon points="11,23 30,9 50,15 50,40 30,52 11,43" fill="none" stroke="#000" strokeWidth="2.2" /></g>, true],
  [<g><polygon points="9,42 18,33 51,33 43,43" fill="#8ba4f4" stroke="#000" strokeWidth="1.8" />{[18, 30, 42].map((x) => <path key={x} d={`M${x - 3} 36 V20 H${x - 6} L${x} 12 L${x + 6} 20 H${x + 3} V36 Z`} fill="#fff" />)}</g>, true],
  [<g {...line} strokeWidth="2">{[15, 29, 43].flatMap((y) => [15, 29, 43].map((x) => <rect key={`${x}${y}`} x={x - 4} y={y - 4} width="8" height="8" />))}</g>, true],
  [<g><g {...line} strokeWidth="2"><rect x="21" y="10" width="18" height="11" /><rect x="25" y="23" width="10" height="9" /><rect x="23" y="36" width="14" height="13" /></g><rect x="28" y="6" width="4" height="45" fill="#c62a20" /></g>, true],
  // row 8
  [<g strokeLinejoin="round" stroke="#000" strokeWidth="1.8"><path d="M11 17 L24 12 L26 34 L22 44 L11 36 Z" fill="#fff" /><path d="M24 12 L20 17 L20 42" fill="none" /><path d="M27 9 L46 17 Q46 32 36 49 L22 44 Q31 30 30 18 Z" fill="#f6f6f6" /><path d="M38 14 L46 17 Q46 32 36 49 L32 47 Q40 32 38 14 Z" fill="#4a66c8" /></g>, true],
  [<path d="M12 34 L18 45 L47 12" fill="none" stroke="#000" strokeWidth="5.5" strokeLinejoin="round" />, true],
  [<g strokeLinejoin="round"><polygon points="11,20 22,14 35,18 25,24" fill="#eee" stroke="#000" strokeWidth="1.5" /><polygon points="11,20 25,24 25,42 11,34" fill="#ddd" stroke="#000" strokeWidth="1.5" /><polygon points="25,24 35,18 35,36 25,42" fill="#888" stroke="#000" strokeWidth="1.5" /><path d="M39 16 L32 35 Q34 43 42 43 Q50 42 49 35 Z" fill="none" stroke="#000" strokeWidth="1.8" /></g>, true],
  [<g strokeLinejoin="round"><polygon points="30,17 13,43 30,49" fill="#f4d888" /><polygon points="30,17 47,41 30,49" fill="url(#pyramid)" /><polygon points="30,17 47,41 30,49 13,43" fill="none" stroke="#000" strokeWidth="1.8" /><Hand x={39} y={6} /></g>, true],
  // row 9
  [<g><circle cx="35" cy="25" r="12" fill="#fff" stroke="#000" strokeWidth="2" /><path d="M13 45 L26 33" stroke="#000" strokeWidth="4" /><path d="M35 19 V27 M31 23 H39 M30 30 H40" stroke="#000" strokeWidth="1.6" /></g>, false],
  [<g><rect x="19" y="13" width="30" height="26" fill="none" stroke="#000" strokeWidth="2" strokeDasharray="5 4" /><circle cx="27" cy="34" r="12" fill="#fff" stroke="#000" strokeWidth="2" /><path d="M9 50 L19 43" stroke="#000" strokeWidth="4" /></g>, false],
  [<g><polygon points="10,10 19,10 10,19" /><polygon points="50,10 41,10 50,19" /><polygon points="10,50 19,50 10,41" /><polygon points="50,50 41,50 50,41" /><circle cx="33" cy="27" r="12" fill="#fff" stroke="#000" strokeWidth="2" /><path d="M15 45 L25 36" stroke="#000" strokeWidth="4" /></g>, false],
  [<g><circle cx="33" cy="28" r="15" fill="#fff" stroke="#000" strokeWidth="2" /><path d="M13 49 L23 39" stroke="#000" strokeWidth="4" /></g>, false],
  // row 10
  [<g><circle cx="32" cy="36" r="10" fill="#fff" stroke="#000" strokeWidth="2" /><path d="M17 52 L25 44" stroke="#000" strokeWidth="4" /><path d="M18 22 Q32 10 48 20" fill="none" stroke="#333" strokeWidth="6" /><polygon points="10,30 22,12 26,28" fill="#000" /></g>, true],
  [<g><rect x="8" y="38" width="44" height="2" fill="#a8a8a8" /><path d="M11 32 L24 28 L28 20 H42 L45 28 L50 31 V35 H11 Z" fill="#d83030" stroke="#902020" strokeWidth="1" /><rect x="29" y="22" width="12" height="6" fill="#fff" /><circle cx="18" cy="35" r="3.5" fill="#ddd" stroke="#000" strokeWidth="2" /><circle cx="40" cy="35" r="3.5" fill="#ddd" stroke="#000" strokeWidth="2" /></g>, true],
  [<g><path d="M10 33 L24 20 L51 27 L44 49 Z M15 28 L44 38 M20 24 L48 32 M29 21 L21 42 M38 23 L33 46" fill="none" stroke="#666" strokeWidth="1.4" /><path d="M30 34 L35 26" stroke="#3a9a3a" strokeWidth="2.5" /><path d="M30 34 L47 38" stroke="#c03030" strokeWidth="2.5" /><rect x="27" y="31" width="7" height="7" fill="#fff" stroke="#000" strokeWidth="2" /></g>, true],
  [<g><path d="M44 9 H51 V16 M9 45 V52 H16" fill="none" stroke="#222" strokeWidth="1.8" /><circle cx="24" cy="23" r="6" fill="#f4d850" stroke="#a8642c" strokeWidth="1.8" /><rect x="32" y="21" width="12" height="12" fill="#f4e050" stroke="#a8642c" strokeWidth="1.8" /><polygon points="27,49 34,37 39,49" fill="none" stroke="#a8642c" strokeWidth="1.8" /></g>, true],
  // row 11
  [<g><path d="M16 25 A14 14 0 1 1 42 25 Q42 32 37 38 V45 Q30 51 23 45 V38 Q16 32 16 25 Z" fill="url(#bulbGrey)" stroke="#000" strokeWidth="1.6" /><ellipse cx="34" cy="17" rx="6" ry="3" fill="#fff" transform="rotate(15 34 17)" /></g>, true],
  [<g><path d="M23 24 V18 A7 7 0 0 1 37 18 V24" fill="none" stroke="#000" strokeWidth="3" /><rect x="19" y="24" width="22" height="21" rx="2" fill="#f0f0f0" stroke="#000" strokeWidth="1.6" /><path d="M23 32 H37 M23 37 H37" stroke="#bbb" strokeWidth="1.6" /></g>, true],
  [<Wedge />, true],
  [<g><circle cx="30" cy="30" r="19" fill="#fff" stroke="#000" strokeWidth="1.5" />{colourRing}<circle cx="30" cy="30" r="18.5" fill="none" stroke="#000" strokeWidth="1.5" /></g>, true],
  // row 12
  [<g><circle cx="30" cy="30" r="17" fill="url(#greyBall)" stroke="#000" strokeWidth="1.8" /><path d="M13 30 Q30 38 47 30 M30 13 Q22 30 30 47" fill="none" stroke="#000" strokeWidth="1.6" /></g>, false],
  [<g><path d="M7 13 H53 M7 21 H53 M7 29 H53 M7 37 H53 M7 45 H53 M13 7 V53 M21 7 V53 M29 7 V53 M37 7 V53 M45 7 V53" stroke="#999" strokeWidth="1.3" /><circle cx="30" cy="30" r="17" fill="url(#greyBall)" stroke="#000" strokeWidth="1.8" /><path d="M13 30 Q30 38 47 30 M30 13 Q22 30 30 47" fill="none" stroke="#000" strokeWidth="1.6" /></g>, true],
  [<Glossy r={17} />, true],
  [<Cone t={[51, 9]} a={[27, 16]} b={[45, 33]} />, true],
  // row 13
  [<g stroke="#000" strokeWidth="1.6" fill="none"><path d="M8 8 H25 M8 27 H25 M13 12 V23 M11 14 L13 11 L15 14 M11 21 L13 24 L15 21" /><path d="M27 30 V46 M47 30 V46 M30 44 H44" /><Sq x={28} y={9} /><Sq x={28} y={29} /><Sq x={47} y={29} /></g>, true],
];

const Dropped = ({ children, dd }: { children?: React.ReactNode; dd?: boolean }) => (
  <Cell viewBox="0 0 60 60">
    {children}
    {dd && <Dd />}
  </Cell>
);

const PALETTE: React.ReactNode[] = [
  <Dropped><Glossy /></Dropped>,
  <Dropped />,
  <Dropped><Glossy /><Hand x={40} y={9} /></Dropped>,
  <Dropped>
    <circle cx="30" cy="30" r="18" fill="#d8d8d8" stroke="#000" strokeWidth="1.6" />
    <path d="M13 24 H47 M12 30 H48 M13 37 H47 M20 14 V46 M27 12 V48 M35 12 V48 M42 15 V45" stroke="#222" strokeWidth="1.1" />
    <Hand x={40} y={9} />
  </Dropped>,
  <Dropped><Cone t={[52, 10]} a={[27, 17]} b={[47, 33]} /></Dropped>,
  <Dropped>
    <path d="M9 9 L52 52 M52 9 L9 52" stroke="#fff" strokeWidth="1.5" />
    <circle cx="31" cy="31" r="8" fill="#ebebeb" stroke="#000" strokeWidth="1.8" />
  </Dropped>,
  <Dropped>
    <path d="M25 26 V42 H41 L36 37 L51 21 L42 12 L30 31 Z" fill="#fff" stroke="#000" strokeWidth="1.8" strokeLinejoin="round" />
  </Dropped>,
  <Dropped><rect x="21" y="19" width="19" height="24" fill="#fff" stroke="#000" strokeWidth="2" /></Dropped>,
  <Dropped><polygon points="13,44 45,12 50,18 18,50" fill="#fff" stroke="#000" strokeWidth="1.8" /></Dropped>,
  <Dropped>
    <path d="M22 38 L36 22" stroke="#000" strokeWidth="2" />
    <circle cx="20" cy="40" r="12" fill="url(#darkBall)" stroke="#000" strokeWidth="1.5" />
    <Cone t={[52, 9]} a={[27, 15]} b={[44, 32]} />
  </Dropped>,
  <Dropped>
    <Cone t={[9, 9]} a={[33, 15]} b={[16, 33]} />
    {EYE(39, 39)}
  </Dropped>,
  <Dropped>
    {EYE(20, 19)}
    <Cone t={[24, 22]} a={[45, 27]} b={[28, 43]} />
  </Dropped>,
  <Dropped>
    <path d="M9 16 Q20 4 36 16 Q20 26 9 16 Z" fill="#fff" stroke="#000" strokeWidth="1.8" />
    <circle cx="22" cy="15" r="6" fill="#6a8cf0" />
    <circle cx="22" cy="15" r="2.2" fill="#000" />
    <Cone t={[24, 16]} a={[40, 27]} b={[29, 42]} />
  </Dropped>,
  <Dropped>
    <circle cx="42" cy="28" r="11" fill="url(#goldBall)" stroke="#000" strokeWidth="1.5" />
    <circle cx="24" cy="36" r="16" fill="url(#softBlue)" stroke="#000" strokeWidth="1.6" />
    <path d="M22 18 Q24 10 32 10 Q37 10 39 16 M18 18 H26 M22 14 V22" fill="none" stroke="#000" strokeWidth="1.8" />
  </Dropped>,
  <Dropped>
    <circle cx="17" cy="17" r="6" fill="#d83030" stroke="#222" strokeWidth="0.8" />
    <circle cx="17" cy="30" r="6" fill="#eee" stroke="#777" strokeWidth="0.8" />
    <circle cx="17" cy="42" r="6" fill="#1430d8" stroke="#222" strokeWidth="0.8" />
    <Wedge s={0.7} x={20} y={7} />
  </Dropped>,
  <Dropped>
    <circle cx="40" cy="30" r="11" fill="url(#softBlue)" stroke="#000" strokeWidth="1.5" />
    <path d="M15 20 Q18 10 28 10 Q36 10 39 18 M10 18 H20 M15 13 V23" fill="none" stroke="#000" strokeWidth="1.8" />
    <Wedge s={0.82} x={-2} y={12} />
  </Dropped>,
  <Dropped dd>
    <path d="M12 30 C12 14 24 10 32 12 L48 22 L48 34 Q40 48 28 48 C18 48 12 42 12 30 Z" fill="#eee" stroke="#000" strokeWidth="1.8" />
    <path d="M14 24 H24 V34 H14 Z M24 34 H34 V44 H24 Z M24 14 H34 V24 H24 Z M34 24 H44 V34 H34 Z" fill="#d84830" />
    <Sq x={12} y={31} /><Sq x={29} y={10} /><Sq x={38} y={47} /><Sq x={48} y={34} /><Sq x={48} y={20} />
  </Dropped>,
  <Dropped dd>
    <polygon points="13,18 30,10 46,16 29,24" fill="#e8b040" />
    <polygon points="13,18 29,24 29,47 13,38" fill="#a4d840" />
    <polygon points="29,24 46,16 46,37 29,47" fill="#4a5ad8" />
    <path d="M21 14 L38 20 M21 21 V42 M37 20 V42 M13 28 L29 35 L46 27" stroke="#7a7a7a" strokeWidth="0.8" fill="none" />
    <polygon points="13,18 30,10 46,16 46,37 29,47 13,38" fill="none" stroke="#000" strokeWidth="1.8" />
  </Dropped>,
];

const Tube = () => (
  <svg width="44" height="44" viewBox="0 0 44 44">
    <path d="M6 30 C6 24 12 24 14 20 L26 8 L34 6 L39 10 L36 20 L24 34 Q18 40 10 38 Q6 36 6 30 Z" fill="#e8e8e8" stroke="#666" strokeWidth="1.5" strokeDasharray="3 1.5" />
    <path d="M20 16 L28 10 L34 16 L26 26 Z" fill="#e0622a" />
    <rect x="30" y="1" width="6" height="6" fill="#aaa" />
  </svg>
);

/* layer table glyphs */
const Bulb = ({ faded }: { faded?: boolean }) => (
  <SmallSvg width="25" height="31" viewBox="2 0 22 28.5" preserveAspectRatio="none" opacity={faded ? 0.35 : 1}>
    <path d="M3 11 A10 10 0 1 1 23 11 Q23 15 19 19 V22 H7 V19 Q3 15 3 11 Z" fill="url(#bulbGold)" />
    <ellipse cx="10" cy="8" rx="3" ry="4" fill="#fff6c0" />
    <rect x="8" y="22" width="10" height="6" rx="2" fill="#b4b4b4" />
  </SmallSvg>
);
const LockIcon = ({ faded }: { faded?: boolean }) => (
  <SmallSvg width="30" height="32" viewBox="0 0 30 32" opacity={faded ? 0.35 : 1}>
    <path d="M18 14 V7 A5.5 5.5 0 0 1 29 7 V14" fill="none" stroke="#bbb" strokeWidth="2.4" />
    <rect x="5" y="14" width="18" height="15" rx="2" fill="url(#lockBrown)" />
    <path d="M5 19 H23 M5 24 H23" stroke="#8a4e18" strokeWidth="1" opacity="0.6" />
  </SmallSvg>
);
const Shade = () => (
  <SmallSvg width="26" height="26" viewBox="0 0 26 26">
    <ellipse cx="13" cy="13" rx="11" ry="13" fill="url(#shade)" />
  </SmallSvg>
);
const Updown = () => (
  <SmallSvg width="12" height="24" viewBox="0 0 12 24">
    <path d="M2 9 L6 3 L10 9 M2 15 L6 21 L10 15" fill="none" stroke="#333" strokeWidth="2" />
  </SmallSvg>
);
const Diamond = ({ c }: { c: string }) => (
  <SmallSvg width="32" height="32" viewBox="0 0 32 32">
    <polygon points="16,1 30,16 16,31 2,16" fill={c} stroke="#000" strokeWidth="2" />
  </SmallSvg>
);
const LAYERS = [
  { n: 'D...', c: '#000000', active: true },
  { n: 'L...', c: '#f04020' },
  { n: 'L...', c: '#7e4fc8' },
  { n: 'L...', c: '#0f3cf0' },
  { n: 'L...', c: '#398a24' },
  { n: 'L...', c: '#ffffff' },
];

const ICON_STROKE = '#5c5c5c';
const PanelIcons = ({ active }: { active: boolean }) => (
  <>
    <PanelIcon viewBox="0 0 48 48">
      <g fill={active ? 'none' : '#f4f4f4'} stroke={active ? '#2f77f2' : ICON_STROKE} strokeWidth="1.6">
        <path d="M6 30 L24 40 L42 30" />
        <polygon points="24,8 42,21 24,33 6,21" />
      </g>
    </PanelIcon>
    <PanelIcon viewBox="0 0 48 48">
      <g fill="none" stroke={ICON_STROKE} strokeWidth="1.6">
        <circle cx="24" cy="24" r="17" />
        <circle cx="24" cy="24" r="9" />
      </g>
    </PanelIcon>
    <PanelIcon viewBox="0 0 48 48">
      <path d="M13 7 H29 L35 13 V40 H13 Z" fill="none" stroke={ICON_STROKE} strokeWidth="1.8" />
    </PanelIcon>
    <PanelIcon viewBox="0 0 48 48">
      <g fill="none" stroke={ICON_STROKE} strokeWidth="1.6">
        <polygon points="9,15 27,6 39,13 39,33 22,42 9,35" />
        <path d="M9 15 L22 22 L39 13 M22 22 V42" />
      </g>
    </PanelIcon>
    <PanelIcon viewBox="0 0 48 48">
      <g fill="none" stroke={ICON_STROKE} strokeWidth="1.6">
        <path d="M6 13 H16 L18 8 H30 L32 13 H43 V40 H6 Z" />
        <circle cx="24" cy="26" r="10" />
        <circle cx="24" cy="26" r="6" />
      </g>
    </PanelIcon>
    <PanelIcon viewBox="0 0 48 48">
      <path d="M6 29 L22 10 L42 18 L33 40 Z M11 23 L37 30 M16 17 L40 24 M28 13 L20 36 M35 15 L27 38" fill="none" stroke="#999" strokeWidth="1.2" />
      <path d="M24 24 L28 15 M24 24 H32" stroke="#333" strokeWidth="2" />
    </PanelIcon>
    <PanelIcon viewBox="0 0 48 48">
      <path d="M40 12 H18 V38 Q18 43 13 43 H10 Q6 43 6 40 Q6 37 10 37 H18 M18 43 H32 Q32 38 32 8 Q32 5 36 5 H43 V9" fill="none" stroke={ICON_STROKE} strokeWidth="1.6" />
    </PanelIcon>
    <PanelIcon viewBox="0 0 48 48">
      <rect x="8" y="8" width="32" height="32" fill="none" stroke={ICON_STROKE} strokeWidth="1.6" />
      <rect x="9" y="9" width="7" height="3" fill={ICON_STROKE} />
    </PanelIcon>
    <PanelIcon viewBox="0 0 48 48">
      <rect x="7" y="7" width="34" height="28" rx="1.5" fill="none" stroke={ICON_STROKE} strokeWidth="2" />
      <path d="M10 31 H38 M24 35 V40 M16 41 H32" stroke={ICON_STROKE} strokeWidth="1.6" />
    </PanelIcon>
    <Question $on={!active}>?</Question>
  </>
);

/* ---- viewport: perspective grid and blocks ---- */
const O = [1085, 1471];
const VX = [3535, -857];
const VY = [-6681, -1081];
const W1 = 0.378 / 50;
const W2 = 0.18 / 50;
const project = (u: number, v0: number) => {
  // the near side of the grid reads slightly tighter in the picture
  const v = v0 < 0 ? v0 * 0.949 : v0;
  const d = 1 + u * W1 + v * W2;
  return [
    (O[0] + u * W1 * VX[0] + v * W2 * VY[0]) / d,
    (O[1] + u * W1 * VX[1] + v * W2 * VY[1]) / d,
  ];
};
const gridPath = (major: boolean) => {
  let d = '';
  for (let i = -50; i <= 50; i++) {
    if ((i % 5 === 0) !== major) continue;
    const [a, b] = project(i, -50);
    const [c, e] = project(i, 50);
    const [f, g] = project(-50, i);
    const [h, j] = project(50, i);
    d += `M${a.toFixed(1)} ${b.toFixed(1)}L${c.toFixed(1)} ${e.toFixed(1)}M${f.toFixed(1)} ${g.toFixed(1)}L${h.toFixed(1)} ${j.toFixed(1)}`;
  }
  return d;
};
const Z = (x: number, y: number) => `${(1000 + x / 1.742).toFixed(1)},${(820 + y / 1.823).toFixed(1)}`;
const BLOCKS: number[][] = [
  [70, 378, 133, 395, 438, 64, 500, 82, 130, 1178, 190, 1197],
  [233, 425, 297, 442, 594, 103, 656, 122, 283, 1230, 345, 1248],
  [400, 472, 466, 490, 752, 145, 816, 163, 438, 1282, 502, 1302],
  [571, 522, 639, 540, 912, 186, 977, 205, 598, 1336, 663, 1355],
  [746, 572, 816, 590, 1077, 228, 1143, 247, 760, 1392, 827, 1411],
  [925, 622, 996, 642, 1246, 272, 1313, 291, 925, 1448, 995, 1468],
  [1108, 676, 1182, 695, 1418, 317, 1488, 335, 1096, 1504, 1165, 1527],
];
const Block = ({ p, i }: { p: number[]; i: number }) => {
  const [ax, ay, bx, by, dx, dy, cx, cy, lx, ly, rx, ry] = p;
  const ex = cx + 30 - i * 11.3;
  const ey = cy + 795;
  return (
    <g strokeLinejoin="round">
      <polygon points={`${Z(bx, by)} ${Z(cx, cy)} ${Z(ex, ey)} ${Z(rx, ry)}`} fill="url(#sideFace)" stroke="#000" strokeWidth="2.5" />
      <polygon points={`${Z(ax, ay)} ${Z(bx, by)} ${Z(rx, ry)} ${Z(lx, ly)}`} fill="url(#frontFace)" stroke="#000" strokeWidth="3" />
      <polygon points={`${Z(ax, ay)} ${Z(bx, by)} ${Z(cx, cy)} ${Z(dx, dy)}`} fill="#727376" stroke="#000" strokeWidth="3" />
    </g>
  );
};

const OFF_TEXT = { fontFamily: 'Inter, sans-serif', fontSize: 24, fill: '#5a5e62' };

const ViewportDrawing = () => {
  const [redX, redY] = project(50, 0);
  const [greenX, greenY] = project(0, 50);
  return (
    <ViewSvg viewBox="302 218 2498 1820">
      <defs>
        <linearGradient id="sideFace" x1="0" y1="0" x2="0" y2="1">
          <stop offset="0" stopColor="#a3a2a0" />
          <stop offset="1" stopColor="#8d8c8b" />
        </linearGradient>
        <linearGradient id="frontFace" x1="0" y1="0" x2="0" y2="1">
          <stop offset="0" stopColor="#8f8f8f" />
          <stop offset="1" stopColor="#7f7f7f" />
        </linearGradient>
      </defs>
      <path d={gridPath(false)} fill="none" stroke="#8e959e" strokeWidth="1.3" opacity="0.85" />
      <path d={gridPath(true)} fill="none" stroke="#7c828b" strokeWidth="1.5" />
      <path d={`M${O[0]} ${O[1]}L${redX} ${redY}`} stroke="#a85252" strokeWidth="3" />
      <path d={`M${O[0]} ${O[1]}L${greenX} ${greenY}`} stroke="#55a050" strokeWidth="3" />
      {BLOCKS.map((b, i) => (
        <Block key={i} p={b} i={i} />
      ))}
      <g stroke="#5a5e62" strokeWidth="2" fill="none">
        <path d="M373 1915 V1966 L400 1938 M373 1966 L321 1952" />
      </g>
      <text x="376" y="1918" {...OFF_TEXT}>z</text>
      <text x="402" y="1942" {...OFF_TEXT}>x</text>
      <text x="322" y="1955" {...OFF_TEXT}>y</text>
    </ViewSvg>
  );
};

const SNAPS: { t: string; on?: boolean; off?: boolean; top?: number }[] = [
  { t: 'End', on: true, top: 22 },
  { t: 'Near' },
  { t: 'Point', on: true },
  { t: 'Midpoint', on: true },
  { t: 'Center' },
  { t: 'Intersection' },
  { t: 'Perpendicular', on: true },
  { t: 'Tangent' },
  { t: 'Quadrant' },
  { t: 'Knot' },
  { t: 'Vertex' },
  { t: 'On curve', off: true },
  { t: 'On surface', off: true },
  { t: 'On polysurface', off: true },
  { t: 'On mesh', off: true },
  { t: 'Project' },
  { t: 'SmartTrack', on: true },
  { t: 'Disable all', top: 36 },
];

const MENU = ['File', 'Edit', 'View', 'Curve', 'Surface', 'Solid', 'Mesh', 'Dimension', 'Transform', 'Tools', 'Analyze', 'Render', 'Window', 'Help'];

const App = () => (
  <Screen>
    <GlobalStyle />
    <Defs />
    <MenuBar>
      <AppleSlot>
        <FaApple />
      </AppleSlot>
      <MenuItems>
        <MenuItem $app>Rhinoceros</MenuItem>
        {MENU.map((m) => (
          <MenuItem key={m}>{m}</MenuItem>
        ))}
      </MenuItems>
      <StatusIcons>
        <StatusSlot $w={68}>
          <svg width="28" height="28" viewBox="0 0 28 28"><circle cx="14" cy="14" r="12" fill="none" stroke="#fff" strokeWidth="2" /><polygon points="11,8 20,14 11,20" fill="#fff" /></svg>
        </StatusSlot>
        <StatusSlot $w={68}>
          <svg width="38" height="30" viewBox="0 0 38 30"><polygon points="2,10 9,10 17,3 17,27 9,20 2,20" fill="#fff" /><path d="M22 10 Q25 15 22 20 M27 6 Q32 15 27 24 M32 3 Q38 15 32 27" fill="none" stroke="#fff" strokeWidth="2" /></svg>
        </StatusSlot>
        <StatusSlot $w={68}>
          <svg width="32" height="26" viewBox="0 0 32 26"><rect x="1" y="1" width="30" height="24" rx="2" fill="#fff" /><rect x="3" y="7" width="26" height="16" fill="#1b1d4b" /><path d="M6 11 H14 M6 15 H14 M6 19 H14 M18 11 V19 M24 11 V19 M17 13 H25 M17 17 H25" stroke="#fff" strokeWidth="1.6" /></svg>
        </StatusSlot>
        <StatusSlot $w={72}>
          <Bluetooth color="#fff" size={32} strokeWidth={2} />
        </StatusSlot>
        <StatusSlot $w={78}>
          <svg width="52" height="26" viewBox="0 0 52 26"><rect x="1" y="2" width="45" height="22" rx="6" fill="none" stroke="#c8c8d0" strokeWidth="1.8" /><rect x="4" y="5" width="38" height="16" rx="3.5" fill="#fff" /><rect x="48" y="9" width="3" height="8" rx="1.5" fill="#c8c8d0" /></svg>
        </StatusSlot>
        <StatusSlot $w={74}>
          <svg width="34" height="26" viewBox="0 0 34 26"><path d="M2 9 Q17 -3 32 9 M7 14 Q17 6 27 14 M12 19 Q17 14 22 19" fill="none" stroke="#fff" strokeWidth="3" /><circle cx="17" cy="23" r="2.4" fill="#fff" /></svg>
        </StatusSlot>
        <StatusSlot $w={64}>
          <Search color="#fff" size={28} strokeWidth={2.2} />
        </StatusSlot>
        <StatusSlot $w={64}>
          <svg width="30" height="28" viewBox="0 0 30 28"><rect x="1" y="1" width="28" height="12" rx="6" fill="none" stroke="#fff" strokeWidth="2" /><circle cx="8" cy="7" r="4" fill="#fff" /><rect x="1" y="15" width="28" height="12" rx="6" fill="#fff" /><circle cx="22" cy="21" r="3.6" fill="#1b1d4b" /></svg>
        </StatusSlot>
        <StatusSlot $w={60}>
          <svg width="28" height="32" viewBox="0 0 28 32"><ellipse cx="14" cy="16" rx="13" ry="15" fill="#3a2c6c" /><path d="M4 12 Q14 16 14 2 Z" fill="#b84090" /><path d="M24 20 Q14 16 14 30 Z" fill="#2878c8" /><path d="M3 22 L25 10 M14 4 V28" stroke="#e8f0ff" strokeWidth="1.4" /></svg>
        </StatusSlot>
        <Clock>{'Tue 16 Mar  13:58'}</Clock>
      </StatusIcons>
    </MenuBar>

    <Window>
      <TitleBar>
        <TitleRow>
          <Lights>
            <Light $c="#f0695b" $b="#de5145" />
            <Light $c="#f5bf4f" $b="#dea034" />
            <Light $c="#61c554" $b="#4eac3d" />
          </Lights>
          <TitleText>
            <svg width="24" height="31" viewBox="0 0 24 31">
              <path d="M1 1 H16 L23 8 V30 H1 Z" fill="#f4f4f4" stroke="#aaa" strokeWidth="1" />
              <path d="M5 4 L9 12 L10 6 L16 16 L21 20 L17 24 L11 19 L5 10 Z" fill="#1a1a1a" />
              <rect x="5" y="25" width="13" height="3" fill="#777" />
            </svg>
            SD_card_holder.3dm
          </TitleText>
          <div />
        </TitleRow>
        <ToolbarRow>
          <svg width="39" height="40" viewBox="0 0 39 40">
            <rect x="0" y="0" width="39" height="40" fill="#2f72ee" />
            <rect x="11" y="4" width="24" height="32" fill="#efeef1" />
          </svg>
          <Toggles>
            <Toggle>Grid Snap</Toggle>
            <Toggle $on>Ortho</Toggle>
            <Toggle>Planar</Toggle>
            <Toggle $on>SmartTrack</Toggle>
            <Toggle $on>Gumball</Toggle>
            <Toggle>History</Toggle>
          </Toggles>
          <CenterTools>
            <OsnapIcon width="36" height="36" viewBox="0 0 36 36">
              <circle cx="18" cy="18" r="17" fill="none" stroke="#777" strokeWidth="1.6" />
              <path d="M18 18 H36" stroke="#000" strokeWidth="2.4" />
              <rect x="14" y="14" width="7" height="8" fill="#fff" stroke="#000" strokeWidth="2" />
            </OsnapIcon>
            <svg width="42" height="42" viewBox="0 0 42 42">
              <circle cx="21" cy="21" r="19.5" fill="none" stroke="#000" strokeWidth="2" />
              <circle cx="21" cy="21" r="10.5" fill="none" stroke="#000" strokeWidth="2" />
            </svg>
            <LayerBox>
              <LayerSwatch />
              <LayerName>Default</LayerName>
            </LayerBox>
          </CenterTools>
          <svg width="39" height="40" viewBox="0 0 39 40">
            <rect x="0" y="0" width="39" height="40" fill="#2f72ee" />
            <rect x="4" y="4" width="24" height="32" fill="#efeef1" />
          </svg>
        </ToolbarRow>
      </TitleBar>

      <Main>
        <LeftPanel>
          <LeftHead />
          <CommandInput>Command</CommandInput>
          <ToolGrid>
            {TOOLS.map(([icon, dd], i) => (
              <Dropped key={i} dd={dd}>
                {icon}
              </Dropped>
            ))}
          </ToolGrid>
          <SnapPanel>
            <RadioRow>
              <RadioDot $on />
              Persistent
            </RadioRow>
            <RadioRow>
              <RadioDot />
              One shot
            </RadioRow>
            {SNAPS.map((s) => (
              <CheckRow key={s.t} $top={s.top} $off={s.off}>
                <CheckBox $on={s.on} $off={s.off}>
                  {s.on && (
                    <svg width="18" height="14" viewBox="0 0 18 14">
                      <path d="M2 7 L7 12 L16 2" fill="none" stroke="#fff" strokeWidth="3" />
                    </svg>
                  )}
                </CheckBox>
                {s.t}
              </CheckRow>
            ))}
          </SnapPanel>
        </LeftPanel>

        <Centre>
          <ViewTabs>
            <ViewIcon viewBox="0 0 40 37">
              <g fill="none" stroke="#444" strokeWidth="1.6">
                <rect x="1" y="1" width="38" height="35" />
                <path d="M20 1 V36 M1 18 H39" />
              </g>
              <path d="M1 1 H9 V5 H1 Z M20 1 H29 V5 H20 Z M1 18 H9 V22 H1 Z M20 18 H29 V22 H20 Z" fill="#444" />
            </ViewIcon>
            <ViewIcon viewBox="0 0 40 37" $gap={22}>
              <rect x="1" y="1" width="38" height="35" fill="none" stroke="#2f77f2" strokeWidth="1.6" />
              <rect x="1" y="1" width="9" height="4" fill="#2f77f2" />
            </ViewIcon>
            <TabSep />
            <ViewTab $on>Perspective</ViewTab>
            <TabSep />
            <ViewTab>Top</ViewTab>
            <TabSep />
            <ViewTab>Front</ViewTab>
            <TabSep />
            <ViewTab>Right</ViewTab>
            <Layouts>Layouts...</Layouts>
          </ViewTabs>
          <Viewport>
            <ViewportDrawing />
            <ViewLabel>Perspective</ViewLabel>
          </Viewport>
        </Centre>

        <RightPanel>
          <PanelTabs>
            <PanelIcons active />
          </PanelTabs>
          <LayersBody>
            <LayerHeader>
              <HeadCell $pad={40}>...</HeadCell>
              <HeadCell $pad={0} />
              <HeadCell $pad={0} />
              <HeadCell $pad={0} />
              <HeadCell $pad={0} />
              <HeadCell $pad={0} />
              <HeadCell $pad={7}>Linetype</HeadCell>
              <HeadCell $pad={0} />
              <HeadCell $none $pad={8}>Pri...</HeadCell>
            </LayerHeader>
            {LAYERS.map((l, i) => (
              <LayerGrid key={i}>
                <LayerName2>{l.n}</LayerName2>
                <Center><ActiveRadio $on={l.active} /></Center>
                <Center><Bulb faded={l.active} /></Center>
                <Center><LockIcon faded={l.active} /></Center>
                <Center><ColourSwatch $c={l.c} /></Center>
                <Center><Shade /></Center>
                <LinetypeCell>
                  Conti...
                  <Updown />
                </LinetypeCell>
                <Center><Diamond c={l.c} /></Center>
                <LinetypeCell>
                  D...
                  <Updown />
                </LinetypeCell>
              </LayerGrid>
            ))}
          </LayersBody>
          <LayersBar>
            <PlusMinus>
              <PmCell viewBox="0 0 48 28"><path d="M13 14 H35 M24 3 V25" stroke="#555" strokeWidth="1.8" /></PmCell>
              <PmCell viewBox="0 0 48 28"><path d="M13 14 H35" stroke="#aaa" strokeWidth="1.8" /></PmCell>
            </PlusMinus>
            <GearButton>
              <svg width="22" height="22" viewBox="0 0 22 22">
                <circle cx="11" cy="11" r="6.5" fill="none" stroke="#333" strokeWidth="4" />
                <path d="M11 0 V4 M11 18 V22 M0 11 H4 M18 11 H22 M3 3 L6 6 M16 16 L19 19 M3 19 L6 16 M16 6 L19 3" stroke="#333" strokeWidth="3.5" />
              </svg>
              <svg width="10" height="8" viewBox="0 0 10 8">
                <path d="M1 2 L5 6 L9 2" fill="none" stroke="#333" strokeWidth="2" />
              </svg>
            </GearButton>
          </LayersBar>
          <PanelTabs>
            <PanelIcons active={false} />
          </PanelTabs>
          <Help>
            <HelpTitle>Delete</HelpTitle>
            <CmdTable>
              <HeadC>Toolbar</HeadC>
              <HeadC>Menu</HeadC>
              <HeadC>Shortcut</HeadC>
              <BodyC>
                <NotIcon>
                  <svg width="50" height="50" viewBox="0 0 50 50">
                    <circle cx="25" cy="25" r="25" fill="#d9d9db" />
                    <path d="M15 15 L35 35 M35 15 L15 35" stroke="#ebecef" strokeWidth="7" />
                  </svg>
                </NotIcon>
                <Link>Not on toolbars.</Link>
              </BodyC>
              <BodyC>
                <BlockLine>Edit</BlockLine>
                <BlockLine $pad={40} $top={10}>Delete</BlockLine>
              </BodyC>
              <BodyC>
                <BlockLine>Press the</BlockLine>
                <BlockLine><Key>Delete</Key>or</BlockLine>
                <BlockLine><Key>Del</Key>key.</BlockLine>
              </BodyC>
            </CmdTable>
            <Para>The Delete command erases selected<br />objects from the model.</Para>
            <SectionHead $top={30}>Note</SectionHead>
            <ListItem $top={9}>
              <NoteDot />
              <div>To restore accidentally deleted<br />objects, use the <Link>Undo</Link> command.</div>
            </ListItem>
            <StepBox $top={23} $h={100}>
              <SectionHead>Steps</SectionHead>
              <ListItem $top={9}>
                <Arrow />
                <div><Link>Select</Link> objects.</div>
              </ListItem>
            </StepBox>
            <StepBox $top={20}>
              <SectionHead>Quick delete for overlapping objects</SectionHead>
              <ListItem $top={9}>
                <Arrow />
                <div>
                  While the <Link>Selection</Link> menu is<br />
                  highlighting an object, press<br />
                  <Key>Delete</Key>or <Key $last>Del</Key>.<br />
                  The highlighted object is deleted.
                </div>
              </ListItem>
              <Shot viewBox="0 0 410 200">
                <rect x="2" y="2" width="406" height="196" fill="#fff" stroke="#9a9a9a" strokeWidth="4" />
                <path d="M6 30 L410 200 M6 100 L200 200 M100 6 L6 80 M210 6 L60 120 M320 6 L120 150 M400 20 L240 200 M100 6 L410 140" stroke="#eeeef4" strokeWidth="1.5" />
                <polygon points="199,55 160,84 266,84" fill="#6a34b0" />
              </Shot>
            </StepBox>
          </Help>
          <Palette>
            <PaletteTitle>
              <PaletteClose />
              Render Tools
            </PaletteTitle>
            <PaletteGrid>
              {PALETTE.map((icon, i) => (
                <React.Fragment key={i}>{icon}</React.Fragment>
              ))}
              <HiCell>
                <HiBack>
                  <Tube />
                </HiBack>
              </HiCell>
            </PaletteGrid>
          </Palette>
          <MuteHud>
            <svg width="46" height="40" viewBox="0 0 46 40">
              <polygon points="2,14 10,14 18,7 18,33 10,26 2,26" fill="#fff" />
              <path d="M24 12 Q28 20 24 28 M30 8 Q36 20 30 32" fill="none" stroke="#fff" strokeWidth="2" />
              <path d="M0 4 L42 38" stroke="#fff" strokeWidth="3" />
            </svg>
          </MuteHud>
        </RightPanel>
      </Main>

      <StatusBar>
        <CmdHistory viewBox="0 0 28 22">
          <path d="M0 1 H28 M0 7.5 H28 M0 14 H28 M0 20.5 H28" stroke="#777" strokeWidth="2" />
        </CmdHistory>
        Command: _Delete
        <StatusRight>
          <span>Millimeters</span>
          <CPlaneSelect>
            CPlane
            <Updown />
          </CPlaneSelect>
          <StatusText $gap={30}>X: -14.314</StatusText>
          <StatusText $gap={62}>Y: -26.986</StatusText>
          <StatusText $gap={62}>Z: 0.000</StatusText>
        </StatusRight>
      </StatusBar>
    </Window>
  </Screen>
);

export default App;
